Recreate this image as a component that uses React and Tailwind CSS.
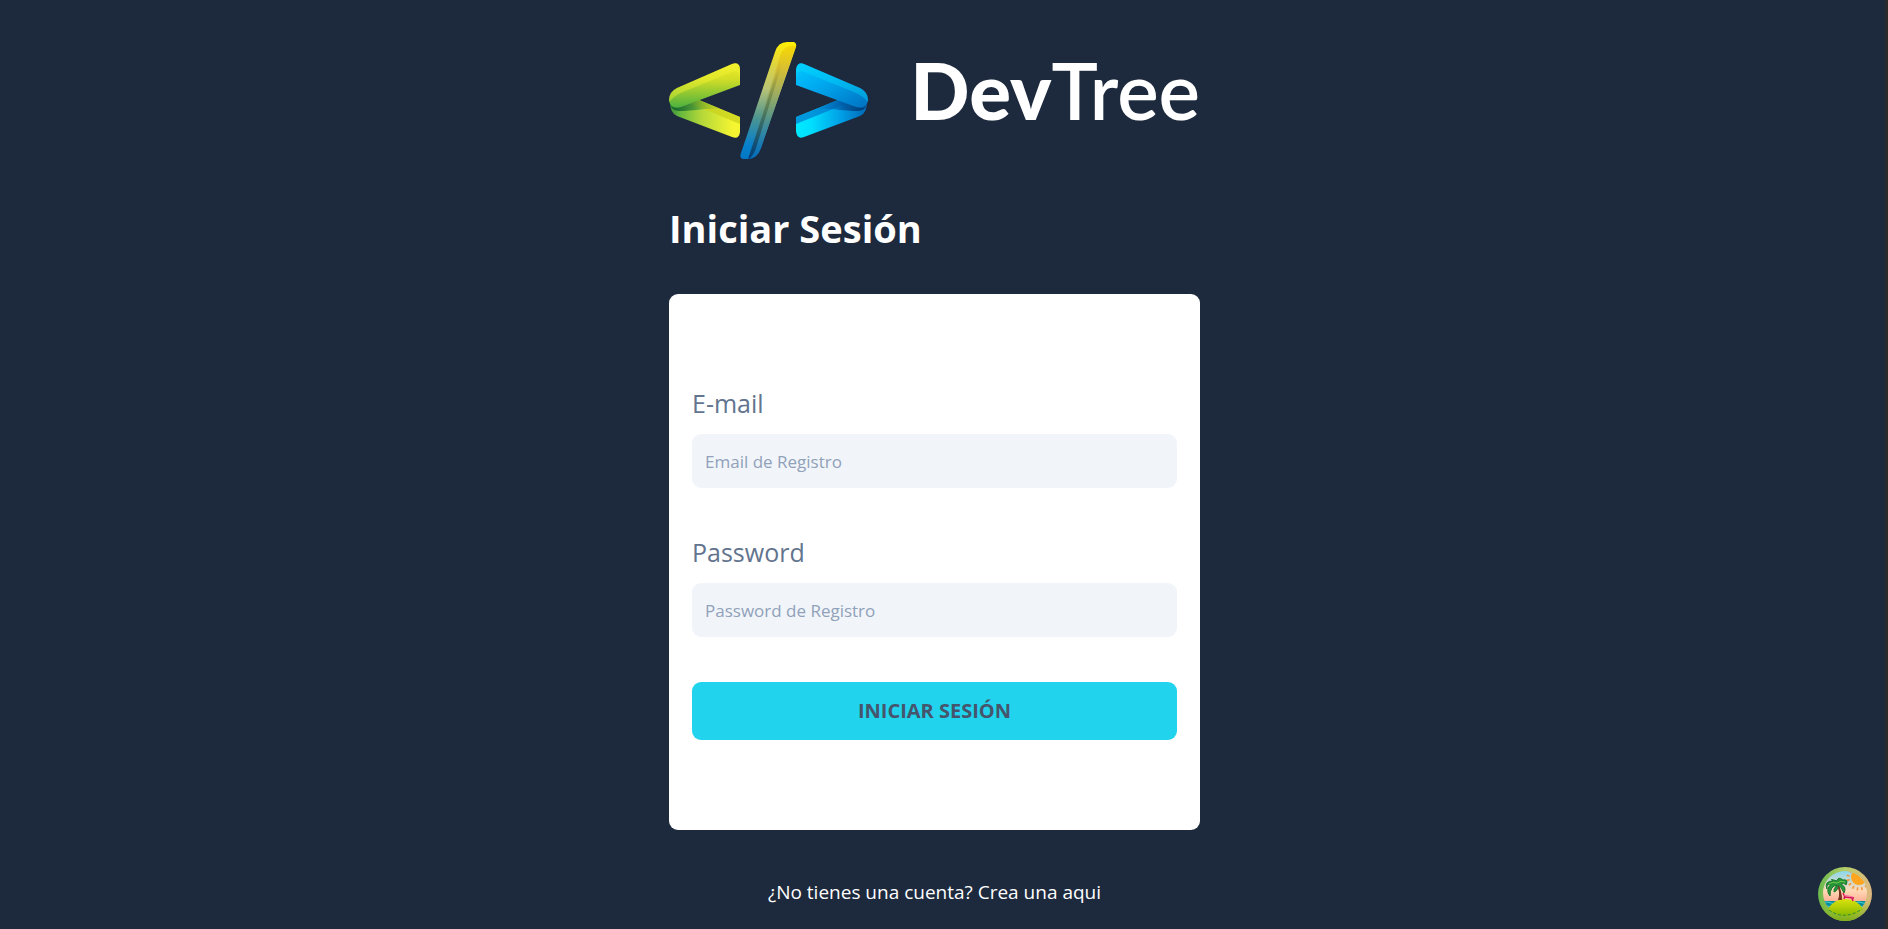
const gradients = [
  ["limeTop", 0, 0, 0, 1, [[0, "#f2ee2a"], [0.35, "#d3de26"], [1, "#4db13f"]]],
  ["limeLow", 0, 0, 1, 0, [[0, "#3d8f3a"], [0.15, "#67b83e"], [0.45, "#b4d839"], [0.9, "#f5f531"]]],
  ["cyanTop", 0, 0, 1, 1, [[0, "#00c8ff"], [0.4, "#00aaf0"], [1, "#0070c0"]]],
  ["cyanLow", 0, 0, 1, 0, [[0, "#00eaff"], [0.2, "#00e0ff"], [0.65, "#009ce4"], [1, "#0068b4"]]],
  ["limeFold", 0, 0, 1, 0, [[0, "#0b5a2c", 0.95], [0.45, "#2c8034", 0.7], [1, "#6fb030", 0]]],
  ["cyanFold", 0, 0, 1, 0, [[0, "#0068b0", 0], [0.55, "#00529a", 0.8], [1, "#003468", 0.95]]],
  ["bar", 0, 0, 0, 1, [[0, "#fff000"], [0.12, "#ecdc2c"], [0.4, "#b9c376"], [0.65, "#4c9590"], [0.88, "#0780cc"], [1, "#0077c4"]]],
  ["barRight", 0, 0, 0, 1, [[0, "#f5d400"], [0.2, "#d8bb2d"], [0.5, "#86a368"], [0.75, "#38889f"], [1, "#0068b8"]]],
  ["shade", 0, 0, 0, 1, [[0, "#5c5a10", 0], [0.4, "#3c5a30", 0.4], [1, "#002c60", 0.75]]],
  ["sky", 0, 0, 0, 1, [[0, "#8bd8ed"], [0.45, "#ffd9b4"], [1, "#ff7a70"]]],
  ["ring", 0, 0, 1, 0, [[0, "#68b84c"], [0.5, "#b5cf6a"], [1, "#e0b680"]]],
  ["ringLow", 0, 0, 0, 1, [[0.6, "#8dba2e", 0], [1, "#7fae12", 1]]],
  ["island", 0, 0, 0, 1, [[0, "#dbe20c"], [1, "#87b900"]]],
];

function Gradients() {
  return (
    <defs>
      {gradients.map(([id, x1, y1, x2, y2, stops]) => (
        <linearGradient key={id} id={id} x1={x1} y1={y1} x2={x2} y2={y2}>
          {stops.map(([offset, color, opacity = 1]) => (
            <stop key={offset} offset={offset} stopColor={color} stopOpacity={opacity} />
          ))}
        </linearGradient>
      ))}
    </defs>
  );
}

function Logo() {
  return (
    <div className="flex items-start justify-between">
      <svg viewBox="0 0 199 117" className="w-[199px] shrink-0" aria-hidden="true">
        <Gradients />
        <path d="M1 60L30 58L71 75V90Q70 98 63 95L8 74Q1 71 1 60Z" fill="url(#limeLow)" />
        <path d="M30 58L71 75V82L20 61Z" fill="#c9d21d" opacity=".75" />
        <path d="M1 62L30 58L52 67L36 67Q18 69 10 69Q3 69 1 62Z" fill="url(#limeFold)" />
        <path d="M0 58Q0 50 8 46L63 22Q71 19 71 28V43L12 65Q1 68 0 58Z" fill="url(#limeTop)" />
        <path d="M0 58Q0 50 8 46L63 22Q71 19 71 28V36Q70 27 63 30L14 50Q6 53 0 60Z" fill="#f5f532" opacity=".4" />
        <path d="M198 60L169 58L127 75V89Q128 98 135 95L191 74Q198 71 198 60Z" fill="url(#cyanLow)" />
        <path d="M169 58L127 75V82L179 61Z" fill="#0078cd" opacity=".7" />
        <path d="M198 62L169 58L147 67L163 67Q181 69 189 69Q196 69 198 62Z" fill="url(#cyanFold)" />
        <path d="M199 58Q199 50 191 46L135 22Q128 19 127 28V43L187 65Q198 68 199 58Z" fill="url(#cyanTop)" />
        <path d="M199 58Q199 50 191 46L135 22Q128 19 127 28V36Q128 27 135 30L185 50Q194 54 199 60Z" fill="#00e5ff" opacity=".35" />
        <path d="M106 10Q109 0 118 0H125Q128 1 127 5L92 106Q88 117 79 117H74Q70 116 72 111Z" fill="url(#bar)" />
        <path d="M111 14Q114 5 121 4H127L92 106Q88 117 79 117Z" fill="url(#barRight)" opacity=".8" />
        <path d="M111 20L113 22L87 106Q84 115 79 117Z" fill="url(#shade)" />
      </svg>
      <span className="font-['Lato',sans-serif] text-[78px] leading-[97px] text-white">
        <span className="font-black">Dev</span><span className="font-semibold">Tree</span>
      </span>
    </div>
  );
}

function IslandIcon() {
  return (
    <svg viewBox="0 0 54 54" className="size-[54px]" aria-hidden="true">
      <defs>
        <clipPath id="scene"><circle cx="27" cy="26" r="22" /></clipPath>
      </defs>
      <circle cx="27" cy="27" r="27" fill="url(#ring)" />
      <circle cx="27" cy="27" r="27" fill="url(#ringLow)" />
      <g clipPath="url(#scene)">
        <path d="M5 4H49V48H5Z" fill="url(#sky)" />
        <circle cx="41" cy="11" r="11" fill="none" stroke="#f7933b" strokeWidth="3" strokeDasharray="1.5 3" />
        <circle cx="41" cy="10" r="8" fill="#ffa51f" />
        <path d="M4 34H50V48H4Z" fill="#078d9d" />
        <path d="M5 36Q9 34 13 36T21 36T29 36T37 36T45 36T53 36M5 40Q9 38 13 40T21 40T29 40T37 40T45 40T53 40" fill="none" stroke="#49d0d0" />
      </g>
      <path d="M10 42Q16 32 27 32Q39 32 45 42Q38 49 27 49Q17 49 10 42Z" fill="url(#island)" />
      <path d="M11 43Q26 54 44 42" fill="none" stroke="#2e8b3d" strokeDasharray="3 2" />
      <path d="M18 17Q23 25 20 33H24Q24 24 20 16Z" fill="#7b3420" />
      <path d="M19 18Q12 19 12 29Q7 23 13 17Q8 17 9 22Q6 14 15 14Q10 11 19 14Q20 9 25 13Q31 12 28 18Q26 15 23 17Q29 20 26 26Q23 19 20 18Q20 24 16 25Q15 22 19 18Z" fill="#279638" stroke="#1d7932" />
      <path d="M11 17Q15 14 19 16Q23 13 27 15" fill="none" stroke="#70c846" />
      <path d="M25 26L27 30L36 31M26 32L27 29M35 34L34 31" fill="none" stroke="#d31855" strokeWidth="1.5" />
      <path d="M26 28L35 30" fill="none" stroke="#f573a4" />
    </svg>
  );
}

function Field({ id, label, type, placeholder }) {
  return (
    <div className="flex flex-col gap-3">
      <label htmlFor={id} className="text-[25px] leading-[38px] text-slate-500">{label}</label>
      <input
        id={id}
        type={type}
        placeholder={placeholder}
        className="h-[54px] w-full rounded-[9px] bg-slate-100 px-[13px] text-[17px] text-slate-700 placeholder:text-slate-400"
      />
    </div>
  );
}

export default function App() {
  return (
    <div className="min-h-screen border-r-[3px] border-[#2b2b2b] bg-slate-800 pr-4 font-['Open_Sans',sans-serif]">
      <main className="mx-auto flex max-w-[531px] flex-col pt-[42px]">
        <Logo />
        <h1 className="mt-11 text-[38px] leading-[50px] font-bold text-white">Iniciar Sesión</h1>
        <form
          className="mt-[41px] flex flex-col gap-[45px] rounded-[9px] bg-white px-[23px] py-[90px]"
          onSubmit={(event) => event.preventDefault()}
        >
          <Field id="email" label="E-mail" type="email" placeholder="Email de Registro" />
          <Field id="password" label="Password" type="password" placeholder="Password de Registro" />
          <button type="submit" className="h-[58px] w-full rounded-[9px] bg-[#22d3ee] text-[20px] font-bold text-slate-600 uppercase">
            Iniciar Sesión
          </button>
        </form>
        <nav className="mt-11 text-center">
          <a href="#registro" className="text-[19px] leading-9 text-white">¿No tienes una cuenta? Crea una aqui</a>
        </nav>
      </main>
      <button type="button" aria-label="Isla" className="fixed right-4 bottom-2 rounded-full">
        <IslandIcon />
      </button>
    </div>
  );
}
